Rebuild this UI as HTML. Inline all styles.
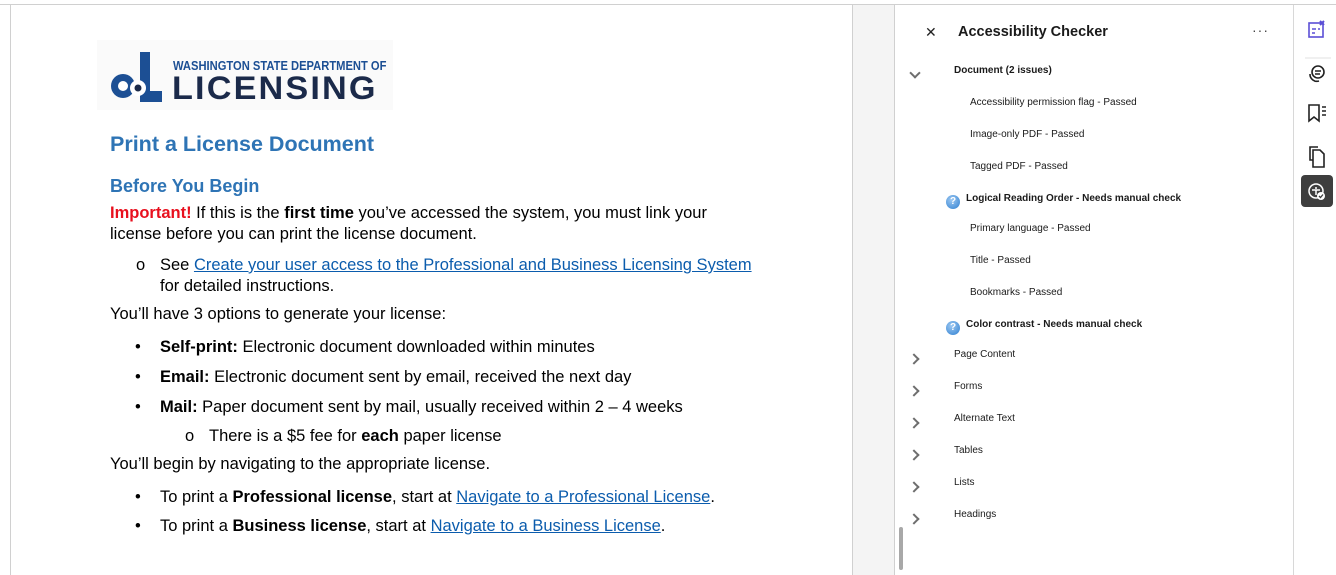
<!DOCTYPE html>
<html><head><meta charset="utf-8"><style>
body{margin:0;width:1336px;height:575px;overflow:hidden;background:#fff;font-family:"Liberation Sans",Arial,sans-serif;position:relative}
.a{position:absolute;white-space:nowrap}
.d{font-size:16.5px;line-height:18px;color:#000}
.lnk{color:#0b5cad;text-decoration:underline}
.p{font-size:10px;line-height:14px;color:#1a1a1a}
.b{font-weight:bold}
.chev{position:absolute;width:6px;height:6px;border-right:2px solid #6e6e6e;border-bottom:2px solid #6e6e6e}
.q{position:absolute;width:14px;height:14px;border-radius:50%;background:radial-gradient(circle at 40% 35%,#9cc8f2,#2f7fd0);color:#fff;font:bold 10px/14px "Liberation Sans",sans-serif;text-align:center}
</style></head><body>
<div class="a" style="left:0;top:4px;width:1336px;height:1px;background:#d0d0d0"></div>
<div class="a" style="left:10px;top:5px;width:1px;height:570px;background:#d0d0d0"></div>
<div class="a" style="left:852px;top:5px;width:41px;height:570px;background:#f4f4f4;border-left:1px solid #d0d0d0;border-right:1px solid #d0d0d0"></div>
<div class="a" style="left:1293px;top:5px;width:1px;height:570px;background:#d8d8d8"></div>

<!-- logo -->
<div class="a" style="left:97px;top:40px;width:296px;height:70px;background:#fafafa"></div>
<svg class="a" style="left:100px;top:40px" width="80" height="70">
<circle cx="23" cy="46" r="12" fill="#1c4f94"/><circle cx="23" cy="46" r="5" fill="#fff"/>
<rect x="40" y="12" width="10" height="50" fill="#1c4f94"/>
<rect x="40" y="51" width="22" height="11" fill="#1c4f94"/>
<circle cx="38" cy="48" r="8" fill="#fff"/><circle cx="38" cy="48" r="3.5" fill="#1b2a4a"/>
</svg>
<div class="a b" style="left:173px;top:59px;font-size:13px;line-height:14px;color:#1c4f94;transform:scaleX(.86);transform-origin:left">WASHINGTON STATE DEPARTMENT OF</div>
<div class="a" style="left:172px;top:72px;font-size:32px;line-height:32px;color:#1b2a4a;letter-spacing:2px;font-weight:bold;transform:scaleX(1.07);transform-origin:left">LICENSING</div>

<div class="a b" style="left:110px;top:132px;font-size:21.5px;line-height:24px;color:#2e74b5">Print a License Document</div>
<div class="a b" style="left:110px;top:175px;font-size:18px;line-height:22px;color:#2e74b5">Before You Begin</div>
<div class="a d" style="left:110px;top:204px"><b style="color:#e8101e">Important!</b> If this is the <b>first time</b> you’ve accessed the system, you must link your</div>
<div class="a d" style="left:110px;top:225px">license before you can print the license document.</div>
<div class="a d" style="left:136px;top:256px">o</div>
<div class="a d" style="left:160px;top:256px">See <span class="lnk">Create your user access to the Professional and Business Licensing System</span></div>
<div class="a d" style="left:160px;top:277px">for detailed instructions.</div>
<div class="a d" style="left:110px;top:305px">You’ll have 3 options to generate your license:</div>
<div class="a d" style="left:135px;top:338px">•</div><div class="a d" style="left:160px;top:338px"><b>Self-print:</b> Electronic document downloaded within minutes</div>
<div class="a d" style="left:135px;top:368px">•</div><div class="a d" style="left:160px;top:368px"><b>Email:</b> Electronic document sent by email, received the next day</div>
<div class="a d" style="left:135px;top:398px">•</div><div class="a d" style="left:160px;top:398px"><b>Mail:</b> Paper document sent by mail, usually received within 2 – 4 weeks</div>
<div class="a d" style="left:185px;top:427px">o</div><div class="a d" style="left:209px;top:427px">There is a $5 fee for <b>each</b> paper license</div>
<div class="a d" style="left:110px;top:455px">You’ll begin by navigating to the appropriate license.</div>
<div class="a d" style="left:135px;top:488px">•</div><div class="a d" style="left:160px;top:488px">To print a <b>Professional license</b>, start at <span class="lnk">Navigate to a Professional License</span>.</div>
<div class="a d" style="left:135px;top:517px">•</div><div class="a d" style="left:160px;top:517px">To print a <b>Business license</b>, start at <span class="lnk">Navigate to a Business License</span>.</div>

<!-- panel -->
<div class="a" style="left:925px;top:22px;font-size:14px;line-height:20px;color:#222">✕</div>
<div class="a b" style="left:958px;top:22px;font-size:14.5px;line-height:20px;color:#1a1a1a">Accessibility Checker</div>
<div class="a" style="left:1252px;top:20px;font-size:14px;line-height:20px;color:#444;letter-spacing:1px">···</div>
<div class="chev" style="left:911px;top:69px;transform:rotate(45deg)"></div>
<div class="a p b" style="left:954px;top:64px">Document (2 issues)</div>
<div class="a p" style="left:970px;top:96px">Accessibility permission flag - Passed</div>
<div class="a p" style="left:970px;top:128px">Image-only PDF - Passed</div>
<div class="a p" style="left:970px;top:160px">Tagged PDF - Passed</div>
<div class="q" style="left:946px;top:195px">?</div><div class="a p b" style="left:966px;top:192px">Logical Reading Order - Needs manual check</div>
<div class="a p" style="left:970px;top:222px">Primary language - Passed</div>
<div class="a p" style="left:970px;top:254px">Title - Passed</div>
<div class="a p" style="left:970px;top:286px">Bookmarks - Passed</div>
<div class="q" style="left:946px;top:321px">?</div><div class="a p b" style="left:966px;top:318px">Color contrast - Needs manual check</div>
<div class="chev" style="left:910px;top:355px;transform:rotate(-45deg)"></div><div class="a p" style="left:954px;top:348px">Page Content</div>
<div class="chev" style="left:910px;top:387px;transform:rotate(-45deg)"></div><div class="a p" style="left:954px;top:380px">Forms</div>
<div class="chev" style="left:910px;top:419px;transform:rotate(-45deg)"></div><div class="a p" style="left:954px;top:412px">Alternate Text</div>
<div class="chev" style="left:910px;top:451px;transform:rotate(-45deg)"></div><div class="a p" style="left:954px;top:444px">Tables</div>
<div class="chev" style="left:910px;top:483px;transform:rotate(-45deg)"></div><div class="a p" style="left:954px;top:476px">Lists</div>
<div class="chev" style="left:910px;top:515px;transform:rotate(-45deg)"></div><div class="a p" style="left:954px;top:508px">Headings</div>
<div class="a" style="left:899px;top:527px;width:4px;height:43px;border-radius:2px;background:#a8a8a8"></div>

<!-- right toolbar -->
<svg class="a" style="left:1296px;top:10px" width="40" height="200" fill="none" stroke-width="1.6" stroke="#222">
<rect x="13" y="13" width="14" height="14" stroke="#5b4fd6"/><path d="M16 19h4M16 23h3M22 19h2" stroke="#5b4fd6"/><path d="M24 11l4 4M28 11l-4 4" stroke="#5b4fd6" stroke-width="2"/>
<line x1="9" y1="48" x2="35" y2="48" stroke="#e0e0e0" stroke-width="1"/>
<circle cx="22" cy="62" r="6"/><path d="M14 64a7 7 0 0 0 9 7M19 61h6M19 64h5"/>
<path d="M13 95v16l5-4 5 4v-16z"/><path d="M26 97h4M26 101h4M26 105h4"/>
<path d="M17 150h-3v-13h8"/><path d="M17 140h7l4 4v13h-11z"/>
<rect x="5" y="165" width="32" height="32" rx="4" fill="#3e3e3e" stroke="none"/>
<circle cx="20" cy="181" r="7" stroke="#fff" stroke-width="1.5"/><circle cx="20" cy="178" r="1" fill="#fff" stroke="none"/><path d="M16 180h8M20 180v5" stroke="#fff" stroke-width="1.5"/>
<circle cx="25" cy="186" r="4" fill="#fff" stroke="none"/><path d="M23 186l1.5 1.5 2.5-3" stroke="#3e3e3e" stroke-width="1.3"/>
</svg>
</body></html>
